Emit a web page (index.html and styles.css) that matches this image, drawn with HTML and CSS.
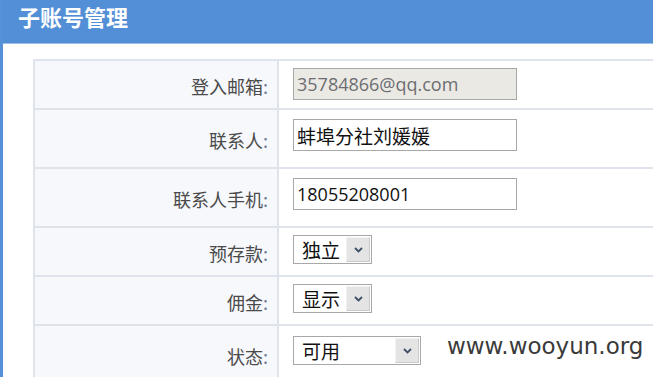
FILE: index.html
```html
<!DOCTYPE html>
<html lang="zh-CN">
<head>
    <meta charset="UTF-8">
    <title>子账号管理</title>
    <link rel="stylesheet" href="styles.css">
</head>
<body>

    <div class="panel">
        <div class="panel-head">子账号管理</div>
        <div class="panel-body">
            <div class="form-table">
                <div class="row">
                    <div class="label">登入邮箱<span class="colon">:</span></div>
                    <div class="field"><input class="text-input locked" type="text" value="35784866@qq.com" readonly></div>
                </div>
                <div class="row tall">
                    <div class="label">联系人<span class="colon">:</span></div>
                    <div class="field"><input class="text-input cjk" type="text" value="蚌埠分社刘媛媛"></div>
                </div>
                <div class="row tall">
                    <div class="label">联系人手机<span class="colon">:</span></div>
                    <div class="field"><input class="text-input" type="text" value="18055208001"></div>
                </div>
                <div class="row">
                    <div class="label">预存款<span class="colon">:</span></div>
                    <div class="field">
                        <div class="select">
                            <span class="select-text">独立</span>
                            <span class="select-btn"><svg width="9" height="6" viewBox="0 0 9 6"><polyline points="1,1 4.5,4.5 8,1" fill="none" stroke="#3e4f66" stroke-width="1.8"/></svg></span>
                        </div>
                    </div>
                </div>
                <div class="row">
                    <div class="label">佣金<span class="colon">:</span></div>
                    <div class="field">
                        <div class="select">
                            <span class="select-text">显示</span>
                            <span class="select-btn"><svg width="9" height="6" viewBox="0 0 9 6"><polyline points="1,1 4.5,4.5 8,1" fill="none" stroke="#3e4f66" stroke-width="1.8"/></svg></span>
                        </div>
                    </div>
                </div>
                <div class="row last">
                    <div class="label">状态<span class="colon">:</span></div>
                    <div class="field">
                        <div class="select wide">
                            <span class="select-text">可用</span>
                            <span class="select-btn"><svg width="9" height="6" viewBox="0 0 9 6"><polyline points="1,1 4.5,4.5 8,1" fill="none" stroke="#3e4f66" stroke-width="1.8"/></svg></span>
                        </div>
                    </div>
                </div>
            </div>
        </div>
    </div>

    <div class="watermark">www.wooyun.org</div>

</body>
</html>
```

FILE: styles.css
```css
* {
    box-sizing: border-box;
}
body {
    margin: 0;
    font-family: "Noto Sans CJK SC", sans-serif;
    background-color: #fff;
    overflow: hidden;
}
.panel {
    border-left: 3px solid #5690d6;
    min-height: 377px;
}
.panel-head {
    height: 44px;
    background-color: #538fd6;
    border-bottom: 1px solid #9cbde6;
    color: #fff;
    font-size: 22px;
    font-weight: bold;
    line-height: 32px;
    padding-left: 15px;
}
.panel-body {
    padding: 15px 0 0 30px;
}
.form-table {
    border-top: 2px solid #dfe3eb;
    border-left: 2px solid #dfe3eb;
}
.row {
    display: flex;
    height: 49px;
    border-bottom: 2px solid #dfe3eb;
}
.row.tall {
    height: 59px;
}
.row.last {
    height: 60px;
}
.label {
    width: 244px;
    flex-shrink: 0;
    display: flex;
    justify-content: flex-end;
    align-items: center;
    padding: 2px 9px 0 0;
    background-color: #f7f8fb;
    border-right: 2px solid #dfe3eb;
    color: #4a4a4a;
    font-size: 18px;
}
.colon {
    color: #6a7a99;
}
.field {
    padding: 7px 0 0 14px;
}
.row.tall .field {
    padding-top: 9px;
}
.row.last .field {
    padding-top: 10px;
}
.text-input {
    width: 224px;
    height: 32px;
    border: 1px solid #a8a8a8;
    padding: 0 3px;
    font-family: "Open Sans", "Noto Sans CJK SC", sans-serif;
    font-size: 18px;
    color: #111;
    background-color: #fff;
    outline: none;
}
.text-input.cjk {
    font-family: "Noto Sans CJK SC", sans-serif;
    font-size: 19px;
}
.text-input.locked {
    background-color: #ebe9e3;
    color: #6c6e73;
}
.select {
    display: flex;
    width: 79px;
    height: 29px;
    border: 1px solid #a8a8a8;
    background-color: #fff;
    padding: 1px;
}
.select.wide {
    width: 128px;
}
.select-text {
    flex: 1;
    padding-left: 7px;
    font-size: 19px;
    line-height: 25px;
    color: #111;
}
.select-btn {
    width: 24px;
    display: flex;
    align-items: center;
    justify-content: center;
    background-color: #e4e4e4;
    border: 1px solid #cacaca;
    border-top-color: #f2f2f2;
    border-left-color: #f2f2f2;
}
.watermark {
    position: absolute;
    left: 447px;
    top: 335px;
    font-family: "DejaVu Sans", sans-serif;
    font-size: 23px;
    line-height: 1;
    color: #3a3a3a;
}
```
